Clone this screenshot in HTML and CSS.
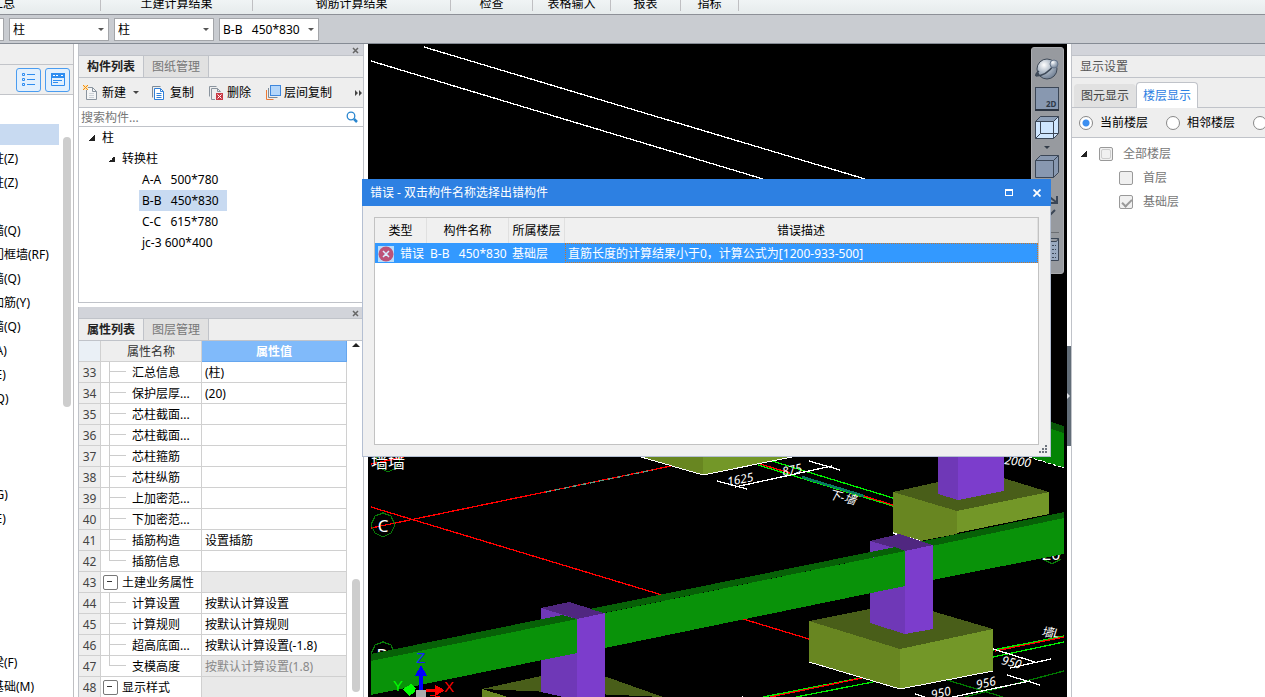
FILE: index.html
```html
<!DOCTYPE html>
<html lang="zh-CN">
<head>
  <meta charset="UTF-8">
  <meta name="viewport" content="width=device-width, initial-scale=1.0">
  <title>土建计量</title>
  <link rel="stylesheet" href="styles.css">
</head>
<body>
  <header class="ribbon">
    <span class="group group-first">汇总</span>
    <span class="group group-civil">土建计算结果</span>
    <span class="group group-rebar">钢筋计算结果</span>
    <span class="group group-check">检查</span>
    <span class="group group-table">表格输入</span>
    <span class="group group-report">报表</span>
    <span class="group group-index">指标</span>
  </header>

  <div class="combo-bar">
    <div class="combo"><select aria-label="楼层"><option></option></select></div>
    <div class="combo"><select aria-label="构件大类"><option>柱</option></select></div>
    <div class="combo"><select aria-label="构件类型"><option>柱</option></select></div>
    <div class="combo"><select aria-label="构件"><option>B-B&nbsp;&nbsp; 450*830</option></select></div>
  </div>

  <main class="workspace">
    <!-- 导航树 -->
    <nav class="nav-dock">
      <div class="nav-head"></div>
      <div class="nav-tools">
        <button class="nav-btn" aria-label="列表">
          <svg width="24" height="24" viewBox="0 0 24 24" fill="none" stroke="#2f8df0">
            <path d="M5.500 5.500h2v2h-2zM5.500 10.500h2v2h-2zM5.500 15.500h2v2h-2zM10 6.500h8M10 11.500h8M10 16.500h8"/>
          </svg>
        </button>
        <button class="nav-btn" aria-label="面板">
          <svg width="24" height="24" viewBox="0 0 24 24" fill="none" stroke="#2f8df0">
            <rect x="5" y="5" width="14" height="5" fill="#2f8df0" stroke="none"/>
            <path d="M5.500 5.500h13v12h-13zM7 12.500h9M7 14.500h5"/>
            <path d="M7 7.500h6M15 7.500h3" stroke="#fff" stroke-dasharray="2 1"/>
          </svg>
        </button>
      </div>
      <ul class="nav-list">
        <li class="selected"></li>
        <li>构造柱(Z)</li>
        <li>砌体柱(Z)</li>
        <li></li>
        <li>剪力墙(Q)</li>
        <li>人防门框墙(RF)</li>
        <li>砌体墙(Q)</li>
        <li>砌体加筋(Y)</li>
        <li>保温墙(Q)</li>
        <li>暗梁(A)</li>
        <li>墙垛(E)</li>
        <li>幕墙(Q)</li>
        <li></li>
        <li></li>
        <li></li>
        <li>连梁(G)</li>
        <li>圈梁(E)</li>
        <li></li>
        <li></li>
        <li></li>
        <li></li>
        <li></li>
        <li>基础梁(F)</li>
        <li>筏板基础(M)</li>
      </ul>
      <div class="thumb nav-thumb"></div>
    </nav>

    <div class="center-dock">
      <section class="panel">
        <div class="panel-strip"><button class="strip-close" aria-label="关闭"><svg width="7" height="7" viewBox="0 0 7 7"><path d="M1 1l5 5M6 1l-5 5" stroke="#666" stroke-width="1.500"/></svg></button></div>
        <div class="tabs">
          <button class="tab active">构件列表</button>
          <button class="tab">图纸管理</button>
        </div>
        <div class="tools">
          <button class="tool">
            <svg width="16" height="16" viewBox="0 0 16 16" fill="none">
              <path d="M3.500 2.500h6l4 4v8h-10z" fill="#f4f5f6" stroke="#8a949e"/><path d="M9.500 2.500v4h4" stroke="#8a949e"/><path d="M6 8.500h5M6 10.500h5M6 12.500h5" stroke="#cdd2d7"/>
              <path d="M0 0h5v5H0z" fill="#fbe3b8"/><path d="M0 0l5 5M5 0l-5 5" stroke="#f08c10"/>
            </svg>
            新建<span class="caret"></span>
          </button>
          <button class="tool">
            <svg width="16" height="16" viewBox="0 0 16 16" fill="none">
              <path d="M1.500 12.500V1.500h8" stroke="#7c8a98"/><path d="M3.500 3.500h6l3 3v8h-9z" fill="#fff" stroke="#2f7fd8"/>
              <path d="M9.500 3.500v3h3M5.500 8.500h5M5.500 10.500h5M5.500 12.500h5" stroke="#2f7fd8"/>
            </svg>
            复制
          </button>
          <button class="tool">
            <svg width="16" height="16" viewBox="0 0 16 16" fill="none">
              <path d="M1.500 11.500v-10h7M7 14.500h-3.500v-11h6l3 3M9.500 3.500v3h3" stroke="#8a949e"/>
              <rect x="8" y="8" width="7" height="7" fill="#c93a45"/><path d="M9.500 9.500l4 4M13.500 9.500l-4 4" stroke="#fff"/>
            </svg>
            删除
          </button>
          <button class="tool">
            <svg width="16" height="16" viewBox="0 0 16 16" fill="none">
              <rect x="5.500" y=".5" width="10" height="10" fill="#b4d6fa" stroke="#3f87dc"/>
              <path d="M3.500 3v9.500h9" stroke="#7c8a98"/><path d="M1.500 5v9.500h7" stroke="#ec7a35"/>
            </svg>
            层间复制
          </button>
          <button class="more" aria-label="更多"><svg width="8" height="6" viewBox="0 0 8 6"><path d="M0 0l3 3-3 3zM4 0l3 3-3 3z" fill="#444"/></svg></button>
        </div>
        <div class="search">
          <input type="text" placeholder="搜索构件..." aria-label="搜索构件">
          <svg width="12" height="12" viewBox="0 0 12 12" fill="none" stroke="#2a86cf"><circle cx="5" cy="5" r="3.800" stroke-width="1.300"/><path d="M8 8l3 3" stroke-width="2.500"/></svg>
        </div>
        <ul class="tree">
          <li><i class="expander"></i>柱</li>
          <li class="level2"><i class="expander"></i>转换柱</li>
          <li class="leaf"><span>A-A&nbsp;&nbsp; 500*780</span></li>
          <li class="leaf selected"><span>B-B&nbsp;&nbsp; 450*830</span></li>
          <li class="leaf"><span>C-C&nbsp;&nbsp; 615*780</span></li>
          <li class="leaf"><span>jc-3 600*400</span></li>
        </ul>
      </section>

      <section class="panel panel-props">
        <div class="panel-strip"><button class="strip-close" aria-label="关闭"><svg width="7" height="7" viewBox="0 0 7 7"><path d="M1 1l5 5M6 1l-5 5" stroke="#666" stroke-width="1.500"/></svg></button></div>
        <div class="tabs">
          <button class="tab active">属性列表</button>
          <button class="tab">图层管理</button>
        </div>
        <div class="props">
          <table class="prop-table">
            <thead>
              <tr><th class="num"></th><th class="name">属性名称</th><th class="value">属性值</th></tr>
            </thead>
            <tbody>
              <tr><td>33</td><td>汇总信息</td><td>(柱)</td></tr>
              <tr><td>34</td><td>保护层厚...</td><td>(20)</td></tr>
              <tr><td>35</td><td>芯柱截面...</td><td></td></tr>
              <tr><td>36</td><td>芯柱截面...</td><td></td></tr>
              <tr><td>37</td><td>芯柱箍筋</td><td></td></tr>
              <tr><td>38</td><td>芯柱纵筋</td><td></td></tr>
              <tr><td>39</td><td>上加密范...</td><td></td></tr>
              <tr><td>40</td><td>下加密范...</td><td></td></tr>
              <tr><td>41</td><td>插筋构造</td><td>设置插筋</td></tr>
              <tr class="last"><td>42</td><td>插筋信息</td><td></td></tr>
              <tr class="parent"><td>43</td><td>土建业务属性</td><td></td></tr>
              <tr><td>44</td><td>计算设置</td><td>按默认计算设置</td></tr>
              <tr><td>45</td><td>计算规则</td><td>按默认计算规则</td></tr>
              <tr><td>46</td><td>超高底面...</td><td>按默认计算设置(-1.8)</td></tr>
              <tr class="last readonly"><td>47</td><td>支模高度</td><td>按默认计算设置(1.8)</td></tr>
              <tr class="parent"><td>48</td><td>显示样式</td><td></td></tr>
            </tbody>
          </table>
          <div class="props-scroll">
            <span class="scroll-up"></span>
            <div class="thumb props-thumb"></div>
          </div>
        </div>
      </section>
    </div>

    <!-- 三维视图 -->
    <div class="view">
      <svg class="scene" viewBox="368 44 699 653" preserveAspectRatio="xMinYMin slice">
        <defs><clipPath id="area"><rect x="371" y="46" width="693" height="651"/></clipPath></defs>
        <g clip-path="url(#area)" shape-rendering="crispEdges">
          <g stroke="#fff" fill="none" stroke-width="1.300">
            <path d="M371 61L763 179M424 47L865 179"/>
          </g>
          <g fill="none" stroke-width="1.300">
            <path d="M371 528L671 466M371 507L662 595M743 619L809 639" stroke="#f00"/>
            <path d="M546 492L653 470" stroke="#5a9a80" stroke-dasharray="5 4"/>
            <path d="M371 464l33-7" stroke="#f00"/>
            <path d="M772 461L893 498M758 465L893 506" stroke="#0e0"/>
            <path d="M760 464L790 473M864 496L893 505" stroke="#f00"/>
            <path d="M802 477L864 496" stroke="#087a62" stroke-width="2.500"/>
            <path d="M763 697L860 678M796 697L873 682M993 650L1064 636M993 657L1064 642" stroke="#0e0"/>
            <path d="M770 697L862 678M995 651L1064 637" stroke="#f00"/>
            <path d="M947 680L1003 697M965 697L1064 671" stroke="#070"/>
            <path d="M717 481L747 489M735 487L832 466M809 461L840 470M993 649L1035 662M1010 668L1051 659M948 698L1030 681M1007 675L1040 685M915 694L925 697M742 697l8 2" stroke="#fff"/>
            <path d="M383 513l8 3 4 9-4 8-8 4-8-4-4-8 4-9zM388 448l8 3 4 9-4 8-8 4-8-4-4-8 4-9zM383 642l8 3 4 9-4 8-8 4-8-4-4-8 4-9zM1043 559l9 5 9-5" stroke="#087a08"/>
          </g>
          <g class="marks">
            <text x="383" y="532" font-size="17" text-anchor="middle">C</text>
            <text x="371" y="468" font-size="17">墙墙</text>
            <text x="382" y="661" font-size="17" text-anchor="middle">B</text>
            <text x="1042" y="560" font-size="16">20</text>
            <text class="dim" transform="translate(728 486) rotate(-11)">1625</text>
            <text class="dim" transform="translate(783 476) rotate(-12)">875</text>
            <text class="dim" transform="translate(828 498) rotate(14)">下-墙</text>
            <text class="dim" transform="translate(1004 464) rotate(7)">2000</text>
            <text class="dim" transform="translate(1001 664) rotate(14)">950</text>
            <text class="dim" transform="translate(1041 636) rotate(5)">墙L</text>
            <text class="dim" transform="translate(932 699) rotate(-12)">950</text>
            <text class="dim" transform="translate(977 689) rotate(-12)">956</text>
          </g>

          <!-- 远处基础和柱 -->
          <path d="M641 457h62v18z" fill="#688621"/><path d="M703 457h88l-88 18z" fill="#739728"/>
          <path d="M641 457l62 18 89-18" fill="none" stroke="#fff"/>
          <path d="M893 492l45-10 65-4 46 14-92 19z" fill="#495e19"/>
          <path d="M893 492l64 19v23l-37 7-27-8z" fill="#688621"/>
          <path d="M957 511l92-19v22l-92 19z" fill="#739728"/>
          <path d="M893 533l27 8" stroke="#fff" stroke-width="1.500"/>
          <path d="M938 455h20v45l-20-6z" fill="#6f38b7"/><path d="M958 455h46v36l-46 9z" fill="#7c3dcc"/>
          <path d="M1028 457l23-29 13 4v36z" fill="#048404"/><path d="M1051 422l13 4v7l-13-4z" fill="#075607"/>
          <path d="M1029 457l35 11" stroke="#fff" stroke-dasharray="3 2"/>

          <!-- 右侧梁 -->
          <path d="M919 542l145-30v6l-132 28z" fill="#076107"/>
          <path d="M932 546l132-28v36l-132 26z" fill="#099209"/>

          <!-- 近处基础 -->
          <path d="M809 621l61-12 62 2 61 18-93 20z" fill="#495e19"/>
          <path d="M809 621l91 28v40l-91-27z" fill="#688621"/>
          <path d="M900 649l93-20v42l-93 18z" fill="#739728"/>
          <path d="M809 662l91 27 93-18" fill="none" stroke="#fff"/>
          <path d="M482 689l59-13h63l59 21z" fill="#495e19"/><path d="M482 689l26 8h-26z" fill="#688621"/>

          <!-- 柱 -->
          <path d="M870 541l35 10v83l-35-11z" fill="#6f38b7"/>
          <path d="M905 551l28-6v84l-28 5z" fill="#7c3dcc"/>
          <path d="M870 541l29-7 34 11-28 6z" fill="#502780"/>
          <path d="M541 608l36 11v81l-36-8z" fill="#6f38b7"/>
          <path d="M577 619l28-6v87h-28z" fill="#7c3dcc"/>
          <path d="M541 608l28-6 36 11-28 6z" fill="#502780"/>

          <!-- 主梁 -->
          <path d="M371 654l191-39 15 4-206 42zM590 609l305-62 10 4-301 62z" fill="#076107"/>
          <path d="M371 661l206-42v34l-206 42zM605 613l300-62v35l-300 62z" fill="#099209"/>

          <!-- 坐标轴 -->
          <path d="M430 695l20 4" stroke="#f00"/>
          <path d="M419 690v-14h-4l6-11 6 11h-4v14z" fill="#00f"/>
          <path d="M426 689h9v-4l8 4 1 2-9 5v-4h-9z" fill="#f00"/>
          <path d="M416 688l-5-4-8 5 6 7 5-3z" fill="#0f0"/>
          <rect x="416" y="690" width="10" height="8" fill="#aaa"/>
        </g>
        <g font-size="15" text-anchor="middle" class="axis">
          <text x="421" y="663" fill="#1420ff">Z</text>
          <text x="449" y="692" fill="#f00">X</text>
          <text x="398" y="691" fill="#0f0">Y</text>
        </g>
      </svg>

      <div class="view-tools">
        <button aria-label="动态观察">
          <svg width="24" height="24" viewBox="0 0 24 24">
            <defs><radialGradient id="ball" cx=".35" cy=".3" r=".8"><stop offset="0" stop-color="#fff"/><stop offset=".5" stop-color="#a9b5c3"/><stop offset="1" stop-color="#66758a"/></radialGradient></defs>
            <circle cx="12" cy="11" r="10" fill="url(#ball)" stroke="#3f4a58"/>
            <path d="M1 18q-1-2 3-5M1 18q10 0 18-11" fill="none" stroke="#3f4a58" stroke-width="1.500"/>
            <path d="M0 18l3-4 2 4z" fill="#3f4a58"/><circle cx="19" cy="6" r="4" fill="url(#ball)" stroke="#66758a"/>
          </svg>
        </button>
        <button aria-label="二维">
          <svg width="24" height="24" viewBox="0 0 24 24"><rect x=".5" y=".5" width="23" height="22" fill="#8898b0" stroke="#3b4656"/><path d="M0 23h24" stroke="#2c3542" stroke-width="2"/><text x="11" y="20" font-size="8" font-weight="bold" fill="#2e3948">2D</text></svg>
        </button>
        <button aria-label="线框">
          <svg width="24" height="24" viewBox="0 0 24 24" fill="#cfe6ff" stroke="#3b4656"><path d="M.5 5.500l5-5h18v17l-5 5H.5z"/><path d="M.5 5.500l5-5h18l-5 5z" fill="#8ea0b8"/><path d="M18.500 5.500v17M.5 22.500l5-5h13l5 0M5.500 6v11.500" fill="none"/></svg>
        </button>
        <span class="drop"></span>
        <button aria-label="实体">
          <svg width="24" height="24" viewBox="0 0 24 24" fill="#8898b0" stroke="#3b4656"><path d="M.5 5.500l5-5h18v17l-5 5H.5z"/><path d="M.5 5.500h18l5-5M18.500 5.500v17" fill="none"/></svg>
        </button>
        <button aria-label="旋转" class="spaced">
          <svg width="24" height="26" viewBox="0 0 24 26" fill="none" stroke="#3b4656" stroke-width="2"><path d="M12 0l9 7M22 1v7h-7M20 15l-6 6"/></svg>
        </button>
        <span class="rule"></span>
        <button aria-label="显示设置">
          <svg width="24" height="24" viewBox="0 0 24 24" fill="#9aaac0" stroke="#3b4656"><path d="M.5 3.500l3-3h20v22H.5zM.5 3.500h21l2-3"/><path d="M14 7.500h7M14 11.500h7M14 15.500h7M14 19.500h7" stroke-dasharray="2 1"/></svg>
        </button>
      </div>
    </div>

    <div class="splitter">
      <span class="splitter-grip"><svg width="4" height="6" viewBox="0 0 4 6"><path d="M0 0l3 3-3 3z" fill="#dfe3e8"/></svg></span>
    </div>

    <!-- 显示设置 -->
    <aside class="display-dock">
      <div class="display-strip"></div>
      <h2 class="display-title">显示设置</h2>
      <div class="display-tabs">
        <button class="display-tab">图元显示</button>
        <button class="display-tab active">楼层显示</button>
      </div>
      <div class="radios">
        <label><input type="radio" name="floor" checked>当前楼层</label>
        <label><input type="radio" name="floor">相邻楼层</label>
        <label><input type="radio" name="floor" aria-label="自定义"></label>
      </div>
      <ul class="floors">
        <li><i class="expander"></i><label><input type="checkbox" class="partial" disabled>全部楼层</label></li>
        <li class="child"><label><input type="checkbox" disabled>首层</label></li>
        <li class="child"><label><input type="checkbox" checked disabled>基础层</label></li>
      </ul>
    </aside>
  </main>

  <div class="dialog" role="dialog" aria-labelledby="dialogTitle">
    <div class="dialog-bar">
      <span id="dialogTitle">错误 - 双击构件名称选择出错构件</span>
      <button aria-label="最大化"><svg width="8" height="7" viewBox="0 0 8 7" shape-rendering="crispEdges"><path d="M0 0h8v7H0zM1 2v4h6V2z" fill="#fff" fill-rule="evenodd"/></svg></button>
      <button aria-label="关闭"><svg width="8" height="8" viewBox="0 0 8 8"><path d="M.5.500l7 7M7.500.500l-7 7" stroke="#fff" stroke-width="1.800"/></svg></button>
    </div>
    <div class="dialog-body">
      <table class="errors">
        <thead>
          <tr><th class="e-type">类型</th><th class="e-name">构件名称</th><th class="e-floor">所属楼层</th><th>错误描述</th></tr>
        </thead>
        <tbody>
          <tr>
            <td><div class="type-cell"><svg width="16" height="16" viewBox="0 0 16 16"><rect width="16" height="16" fill="#b9dcfb"/><circle cx="8" cy="8" r="7.500" fill="#bd5378"/><path d="M5 5l6 6M11 5l-6 6" stroke="#d9eeff" stroke-width="1.500"/></svg>错误</div></td>
            <td>B-B&nbsp;&nbsp; 450*830</td>
            <td>基础层</td>
            <td class="focus">直筋长度的计算结果小于0，计算公式为[1200-933-500]</td>
          </tr>
        </tbody>
      </table>
    </div>
    <svg class="grip" width="8" height="8" viewBox="0 0 8 8" fill="#6f7680"><path d="M6 0h2v2H6zM3 3h2v2H3zM6 3h2v2H6zM0 6h2v2H0zM3 6h2v2H3zM6 6h2v2H6z"/></svg>
  </div>
</body>
</html>
```

FILE: styles.css
```css
* {
  box-sizing: border-box;
}

body {
  margin: 0;
  height: 100vh;
  display: flex;
  flex-direction: column;
  overflow: hidden;
  position: relative;
  font: 12px/20px "Noto Sans", "Noto Sans CJK SC", sans-serif;
  color: #000;
  background: #fff;
}

button, input, select {
  font: inherit;
  color: inherit;
}

button {
  padding: 0;
  border: none;
  background: none;
}

svg {
  display: block;
  flex: none;
}

ul {
  list-style: none;
  margin: 0;
  padding: 0;
}

/* ribbon */
.ribbon {
  flex: none;
  display: flex;
  align-items: flex-end;
  height: 15px;
  overflow: hidden;
  background: linear-gradient(#f0f4f5, #e6ebec);
  border-bottom: 1px solid #8d9097;
}

.group {
  flex: none;
  height: 20px;
  margin-bottom: 3px;
  line-height: 26px;
  text-align: center;
  border-right: 1px solid #bfbfc2;
}

.group-first {
  width: 110px;
  margin-left: -9px;
  text-align: left;
}

.group-civil { width: 152px; }
.group-rebar { width: 198px; }
.group-check { width: 82px; }
.group-table { width: 78px; }
.group-report { width: 70px; }
.group-index { width: 58px; }

.combo-bar {
  flex: none;
  display: flex;
  gap: 5px;
  height: 29px;
  padding: 3px 0 0;
  background: #c9ccd1;
  border-bottom: 1px solid #858b94;
  overflow: hidden;
}

.combo {
  position: relative;
  flex: none;
  width: 100px;
  height: 23px;
}

.combo:first-child {
  margin-left: -96px;
}

.combo select {
  appearance: none;
  width: 100%;
  height: 100%;
  padding: 0 16px 0 3px;
  background: #fff;
  border: 1px solid #a3a5a9;
  border-radius: 0;
}

.combo::after {
  content: "";
  position: absolute;
  right: 5px;
  top: 10px;
  border: 3px solid transparent;
  border-top-color: #555;
  border-bottom: 0;
}

.workspace {
  flex: 1;
  min-height: 0;
  display: flex;
}

.thumb {
  background: #cdcdcd;
  border-radius: 4px;
  width: 8px;
}

/* navigation */
.nav-dock {
  position: relative;
  flex: none;
  width: 74px;
  overflow: hidden;
  border-right: 1px solid #bfbfc2;
}

.nav-head {
  height: 21px;
  background: #efefef;
  border-bottom: 1px solid #c2c4c9;
}

.nav-tools {
  display: flex;
  gap: 4px;
  height: 30px;
  padding: 3px 0 0 16px;
  background: #efefef;
  border-bottom: 1px solid #c2c4c9;
}

.nav-btn {
  width: 25px;
  height: 24px;
  border: 1px solid #4a9cf0;
  border-radius: 3px;
  background: #e3f0fd;
  display: flex;
  align-items: center;
  justify-content: center;
}

.nav-list {
  margin-top: 29px;
}

.nav-list li {
  height: 24px;
  margin-left: -32px;
  line-height: 22px;
  white-space: nowrap;
}

.nav-list .selected {
  height: 21px;
  width: 91px;
  margin-bottom: 3px;
  background: #c8daf1;
}

.nav-thumb {
  position: absolute;
  right: 2px;
  top: 93px;
  height: 270px;
}

/* middle panels */
.center-dock {
  flex: none;
  width: 286px;
  margin: 0 4px;
  display: flex;
  flex-direction: column;
  gap: 4px;
}

.panel {
  flex: none;
  height: 259px;
  border: 1px solid #c0c3c9;
  border-top: none;
  display: flex;
  flex-direction: column;
}

.panel-props {
  flex: 1;
  min-height: 0;
  height: auto;
  border-bottom: none;
}

.panel-strip {
  flex: none;
  display: flex;
  justify-content: flex-end;
  align-items: flex-end;
  height: 12px;
  padding: 0 4px 1px 0;
  background: #d2d4da;
  border-bottom: 1px solid #c0c3c9;
}

.tabs {
  flex: none;
  display: flex;
  height: 22px;
  background: #eee;
  border-bottom: 1px solid #c0c3c9;
}

.tab {
  width: 65px;
  line-height: 21px;
  color: #777;
  background: #e1e1e1;
  border-right: 1px solid #c0c3c9;
}

.tab.active {
  font-weight: bold;
  color: #222;
  background: #eee;
}

.tools {
  flex: none;
  display: flex;
  align-items: center;
  gap: 14px;
  height: 30px;
  padding: 0 0 0 4px;
  background: #eee;
  border-bottom: 1px solid #c0c3c9;
}

.tool {
  flex: none;
  display: flex;
  align-items: center;
  gap: 3px;
}

.caret {
  margin: 0 -2px 0 4px;
  border: 3px solid transparent;
  border-top-color: #444;
  border-bottom: 0;
}

.more {
  margin-left: auto;
}

.search {
  flex: none;
  display: flex;
  align-items: center;
  height: 19px;
  padding-right: 5px;
  border-bottom: 1px solid #c0c3c9;
}

.search input {
  flex: 1;
  min-width: 0;
  height: 18px;
  padding: 2px 2px 0;
  border: none;
  outline: none;
}

.search input::placeholder {
  color: #777;
}

.tree li {
  display: flex;
  align-items: center;
  height: 21px;
  padding-left: 10px;
}

.tree .level2 {
  padding-left: 30px;
}

.tree .leaf {
  padding-left: 60px;
}

.tree .leaf span {
  padding: 0 8px 0 3px;
  line-height: 21px;
}

.tree .selected span {
  background: #c8daf1;
}

.expander {
  flex: none;
  width: 6px;
  height: 6px;
  margin-right: 7px;
  background: linear-gradient(135deg, transparent 50%, #222 50%);
}

/* properties */
.props {
  flex: 1;
  min-height: 0;
  display: flex;
  overflow: hidden;
}

.prop-table {
  flex: 1;
  align-self: flex-start;
  table-layout: fixed;
  border-spacing: 0;
}

.prop-table .num { width: 22px; background: #eaf0f6; }
.prop-table .name { width: 101px; }

.prop-table th,
.prop-table td {
  height: 21px;
  padding: 2px 0 0;
  line-height: 18px;
  white-space: nowrap;
  border-right: 1px solid #d0d0d0;
  border-bottom: 1px solid #d0d0d0;
}

.prop-table th {
  font-weight: normal;
  color: #333;
  background: #eee;
}

.prop-table th.value {
  font-weight: bold;
  color: #fff;
  background: #80bafa;
  border-color: #66a6ee;
}

.prop-table td:first-child {
  text-align: center;
  color: #444;
  background: #eee;
}

.prop-table td:nth-child(2) {
  position: relative;
  padding-left: 31px;
}

.prop-table td:nth-child(3) {
  padding-left: 3px;
}

.prop-table td:nth-child(2)::before {
  content: "";
  position: absolute;
  left: 8px;
  top: 0;
  height: 21px;
  border-left: 1px solid #ccc;
}

.prop-table td:nth-child(2)::after {
  content: "";
  position: absolute;
  left: 8px;
  top: 9px;
  width: 17px;
  border-top: 1px solid #ccc;
}

.prop-table .last td:nth-child(2)::before {
  height: 10px;
}

.prop-table .parent td:nth-child(2) {
  padding-left: 21px;
}

.prop-table .parent td:nth-child(2)::before {
  left: 2px;
  top: 3px;
  width: 13px;
  height: 13px;
  border: 1px solid #777;
  border-radius: 2px;
}

.prop-table .parent td:nth-child(2)::after {
  left: 6px;
  width: 5px;
  border-color: #333;
}

.prop-table .parent td:last-child,
.prop-table .readonly td:last-child {
  color: #888;
  background: #e9e9e9;
}

.props-scroll {
  position: relative;
  flex: none;
  width: 16px;
}

.scroll-up {
  position: absolute;
  left: 5px;
  top: 2px;
  border: 4px solid transparent;
  border-bottom-color: #222;
  border-top: 0;
}

.props-thumb {
  position: absolute;
  left: 5px;
  bottom: 5px;
  height: 113px;
}

/* 3d view */
.view {
  position: relative;
  flex: 1;
  min-width: 0;
  background: #000;
  overflow: hidden;
}

.scene {
  width: 100%;
  height: 100%;
}

.marks {
  fill: #fff;
}

.marks .dim {
  font-size: 12px;
  font-style: italic;
}

.axis {
  font-family: "Liberation Sans", sans-serif;
}

.view-tools {
  position: absolute;
  right: 3px;
  top: 3px;
  width: 33px;
  height: 227px;
  padding: 10px 1px 0 0;
  display: flex;
  flex-direction: column;
  align-items: center;
  gap: 5px;
  background: #979a9f;
  border: 1px solid #a9abaf;
  border-radius: 3px;
}

.drop {
  margin: 1px 0;
  border: 3px solid transparent;
  border-top-color: #333c49;
  border-bottom: 0;
}

.spaced {
  margin-top: 11px;
}

.rule {
  width: 24px;
  margin-top: 6px;
  border-top: 1px solid #6b6e73;
}

.splitter {
  flex: none;
  display: flex;
  align-items: center;
  width: 4px;
}

.splitter-grip {
  display: flex;
  align-items: center;
  width: 4px;
  height: 100px;
  margin-top: 50px;
  background: #626d78;
}

/* display settings */
.display-dock {
  flex: none;
  width: 194px;
  overflow: hidden;
  border-left: 1px solid #c0c3c9;
  color: #777;
}

.display-strip {
  height: 12px;
  background: #d2d4da;
  border-bottom: 1px solid #c0c3c9;
}

.display-title {
  height: 22px;
  margin: 0;
  padding-left: 8px;
  font-size: 12px;
  font-weight: normal;
  line-height: 21px;
  color: #555;
  background: #eee;
  border-bottom: 1px solid #c0c3c9;
}

.display-tabs {
  display: flex;
  align-items: flex-end;
  height: 30px;
  padding-left: 2px;
  background: #eee;
  border-bottom: 1px solid #c0c3c9;
}

.display-tab {
  width: 62px;
  height: 23px;
  line-height: 24px;
  color: #444;
  background: #e1e1e1;
  border-radius: 4px 4px 0 0;
}

.display-tab.active {
  height: 26px;
  margin-bottom: -1px;
  color: #2d80e2;
  background: #fff;
  border: 1px solid #c0c3c9;
  border-bottom: none;
}

.radios {
  display: flex;
  gap: 18px;
  height: 30px;
  padding-left: 7px;
  color: #000;
  background: #eee;
  border-bottom: 1px solid #c0c3c9;
}

.radios label,
.floors label {
  flex: none;
  display: flex;
  align-items: center;
  gap: 7px;
}

.radios input,
.floors input {
  appearance: none;
  width: 14px;
  height: 14px;
  margin: 0;
  background: #fff;
  border: 1px solid #888;
}

.radios input {
  border-radius: 50%;
}

.radios input:checked {
  background: radial-gradient(circle, #3c8ff0 3px, #fff 4px);
}

.floors {
  padding-top: 4px;
}

.floors li {
  display: flex;
  align-items: center;
  height: 24px;
  padding-left: 9px;
}

.floors .child {
  padding-left: 47px;
}

.floors .expander {
  margin-right: 12px;
}

.floors label {
  gap: 10px;
}

.floors input {
  position: relative;
  background: #f0f0f0;
  border-color: #999;
  border-radius: 2px;
}

.floors .partial::after {
  content: "";
  position: absolute;
  inset: 1px;
  border: 1px solid #ccc;
  border-radius: 2px;
}

.floors input:checked::after {
  content: "";
  position: absolute;
  left: 4px;
  top: 1px;
  width: 4px;
  height: 8px;
  border: solid #999;
  border-width: 0 2px 2px 0;
  transform: rotate(45deg);
}

/* error dialog */
.dialog {
  position: absolute;
  left: 362px;
  top: 179px;
  width: 689px;
  height: 278px;
  display: flex;
  flex-direction: column;
  background: #f0f0f0;
  border: 1px solid #b4bfd2;
  border-top: none;
}

.dialog-bar {
  flex: none;
  display: flex;
  align-items: center;
  gap: 20px;
  height: 27px;
  margin: 0 -1px;
  padding: 0 10px 0 8px;
  color: #fff;
  background: #2d80e2;
}

.dialog-bar span {
  flex: 1;
}

.dialog-body {
  flex: 1;
  margin: 11px 11px 11px 11px;
  background: #fff;
  border: 1px solid #c2c2c2;
}

.errors {
  width: 100%;
  table-layout: fixed;
  border-spacing: 0;
}

.e-type { width: 52px; }
.e-name { width: 82px; }
.e-floor { width: 56px; }

.errors th {
  height: 25px;
  padding: 0;
  font-weight: normal;
  background: #f0f0f0;
  border-right: 1px solid #e0e0e0;
}

.errors td {
  height: 20px;
  padding: 2px 0 0 3px;
  line-height: 18px;
  white-space: nowrap;
  color: #fff;
  background: #3399ff;
}

.type-cell {
  display: flex;
  align-items: center;
  gap: 6px;
}

.errors .focus {
  outline: 1px dotted #c8762a;
  outline-offset: -1px;
}

.grip {
  position: absolute;
  right: 3px;
  bottom: 3px;
}
```
